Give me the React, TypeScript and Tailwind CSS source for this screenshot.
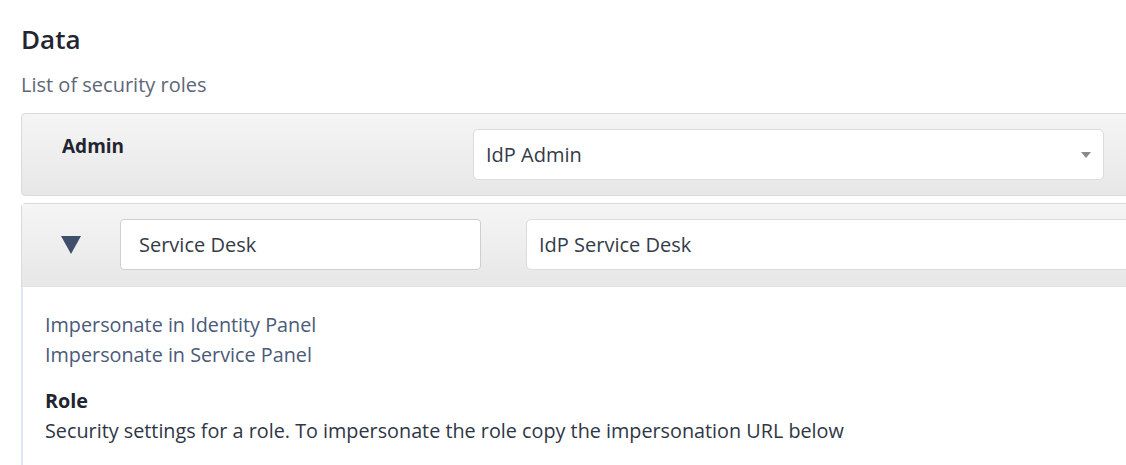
import React from 'react'

const font = { fontFamily: '"Open Sans", "Noto Sans", Arial, sans-serif' }

function Caret() {
  return (
    <svg className="w-[10px] h-[6px]" viewBox="0 0 10 6">
      <path d="M0 0h10L5 6z" fill="#8a8a8a" />
    </svg>
  )
}

function Toggle() {
  return (
    <svg className="w-[20px] h-[18px]" viewBox="0 0 20 18">
      <path d="M0 0h20L10 18z" fill="#3f4f6b" />
    </svg>
  )
}

export default function App() {
  return (
    <div className="w-[1126px] h-[465px] overflow-hidden bg-white" style={font}>
      <div className="w-[1150px] pl-[21px] pt-[23px]">
        <h2 className="text-[26px] leading-[32px] font-semibold text-[#222530]">Data</h2>
        <p className="mt-[17px] text-[20px] leading-[26px] text-[#5e6679]">List of security roles</p>

        {/* Admin role, collapsed */}
        <div className="mt-[15px] h-[83px] flex items-start border border-[#dadada] rounded-tl-[4px] rounded-bl-[4px] bg-gradient-to-b from-[#f5f5f5] to-[#e7e7e7]">
          <div className="w-[451px] pl-[40px] pt-[19px] text-[19px] leading-[26px] font-bold text-[#222530]">
            Admin
          </div>
          <div className="mt-[15px] w-[631px] h-[51px] flex items-center justify-between pl-[12px] pr-[12px] bg-white border border-[#dcdcdc] rounded-[5px] text-[20px] text-[#343b48]">
            <span>IdP Admin</span>
            <Caret />
          </div>
        </div>

        {/* Service Desk role, expanded */}
        <div className="mt-[7px] border border-[#dadada] rounded-tl-[4px]">
          <div className="h-[83px] flex items-start bg-gradient-to-b from-[#f5f5f5] to-[#e7e7e7] border-b border-[#e2e2e2]">
            <div className="w-[98px] h-full flex items-center pl-[39px]">
              <Toggle />
            </div>
            <div className="mt-[15px] w-[361px] h-[51px] flex items-center pl-[18px] bg-white border border-[#cfcfcf] rounded-[4px] text-[20px] text-[#343b48]">
              Service Desk
            </div>
            <div className="mt-[15px] ml-[45px] w-[620px] h-[51px] flex items-center pl-[12px] bg-white border border-[#dcdcdc] rounded-l-[5px] text-[20px] text-[#343b48]">
              IdP Service Desk
            </div>
          </div>
          <div className="border-l-2 border-[#dbe6f1] -ml-px pl-[22px] pt-[23px] pb-[30px] text-[19.8px] leading-[30px]">
            <div className="text-[#4a5a78]">Impersonate in Identity Panel</div>
            <div className="text-[#4a5a78]">Impersonate in Service Panel</div>
            <div className="mt-[16px] font-bold text-[#222530]">Role</div>
            <div className="text-[#2f3644]">
              Security settings for a role. To impersonate the role copy the impersonation URL below
            </div>
          </div>
        </div>
      </div>
    </div>
  )
}
